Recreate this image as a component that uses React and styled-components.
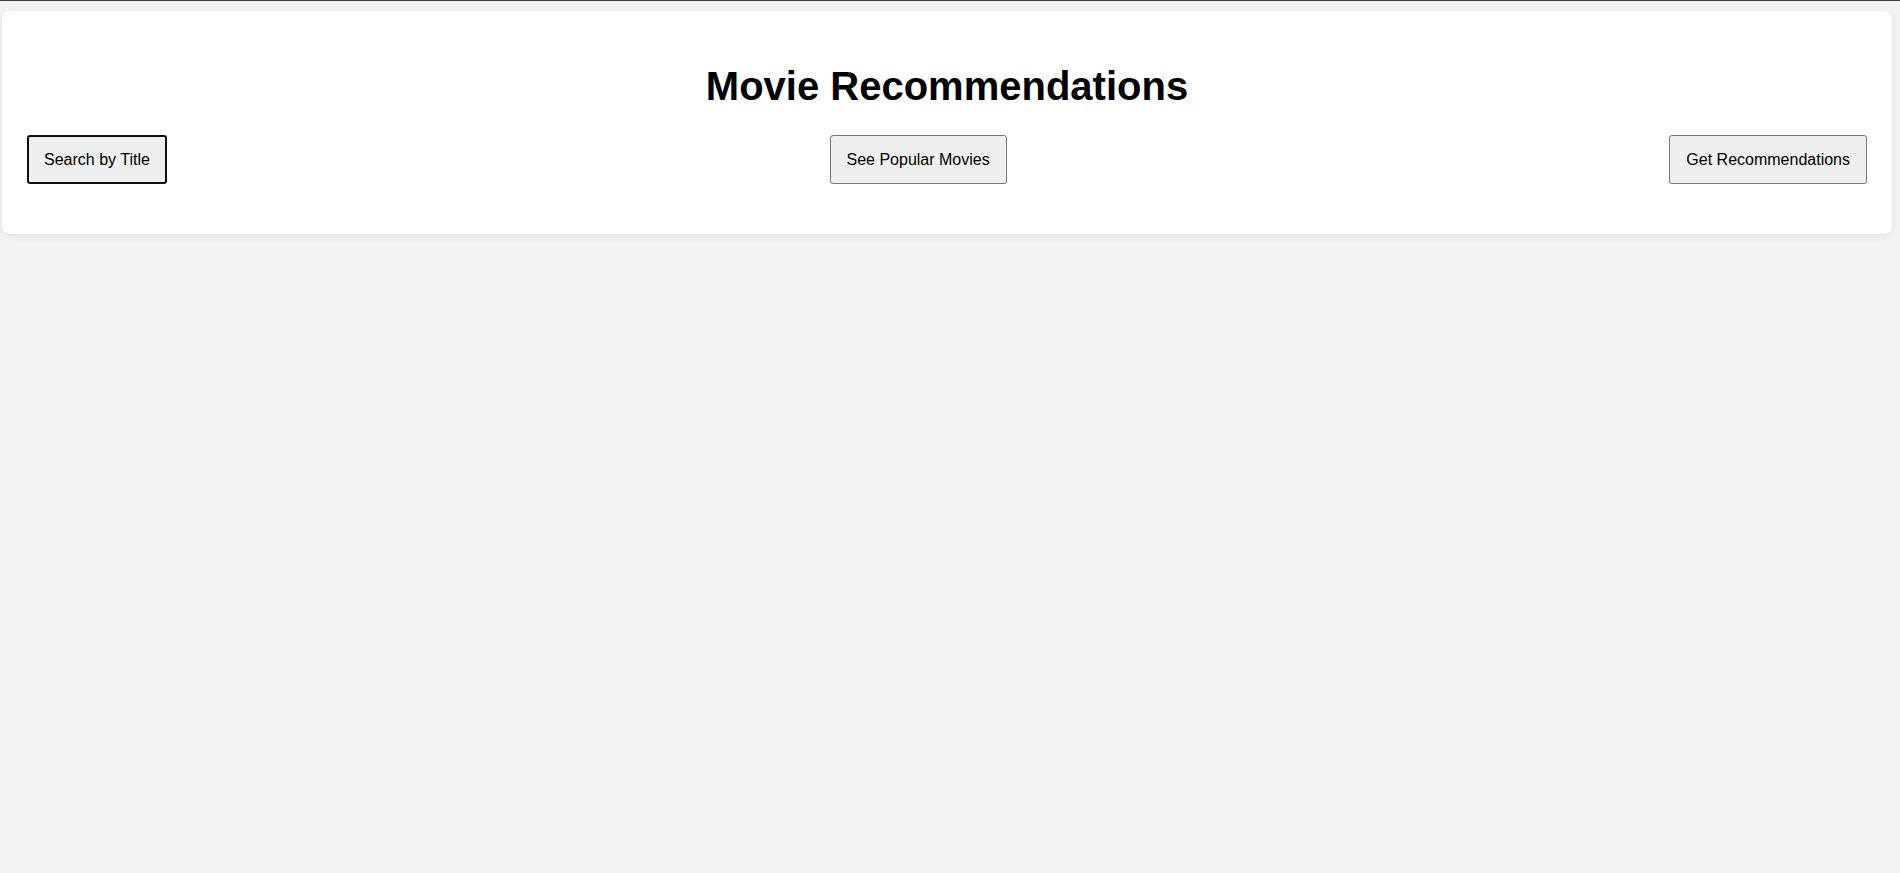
import React from "react";
import styled, { createGlobalStyle } from "styled-components";

const GlobalStyle = createGlobalStyle`
  html, body {
    margin: 0;
    padding: 0;
    background: #f3f3f3;
    font-family: "Liberation Sans", Arial, sans-serif;
  }
  body {
    border-top: 1px solid #3c3c3c;
  }
`;

const Page = styled.div`
  padding: 10px 8px 0 2px;
  min-height: 100vh;
  box-sizing: border-box;
`;

const Header = styled.header`
  background: #fff;
  border-radius: 8px;
  box-shadow: 0 2px 8px rgba(0, 0, 0, 0.08);
  padding: 25px 25px 50px;
`;

const Title = styled.h1`
  margin: 0 0 26px;
  padding-top: 27px;
  text-align: center;
  font-size: 40px;
  font-weight: bold;
  line-height: 46px;
  color: #000;
`;

const Nav = styled.nav`
  display: flex;
  justify-content: space-between;
  align-items: center;
`;

const NavButton = styled.button`
  font-family: "Liberation Sans", Arial, sans-serif;
  font-size: 16px;
  line-height: 19px;
  color: #000;
  background: #efefef;
  border: ${(p) => (p.$active ? "2px solid #101010" : "1px solid #767676")};
  border-radius: 3px;
  padding: ${(p) => (p.$active ? "13px 15px" : "14px 16px")};
  cursor: pointer;
`;

export default function App() {
  return (
    <>
      <GlobalStyle />
      <Page>
        <Header>
          <Title>Movie Recommendations</Title>
          <Nav>
            <NavButton $active>Search by Title</NavButton>
            <NavButton>See Popular Movies</NavButton>
            <NavButton>Get Recommendations</NavButton>
          </Nav>
        </Header>
      </Page>
    </>
  );
}
